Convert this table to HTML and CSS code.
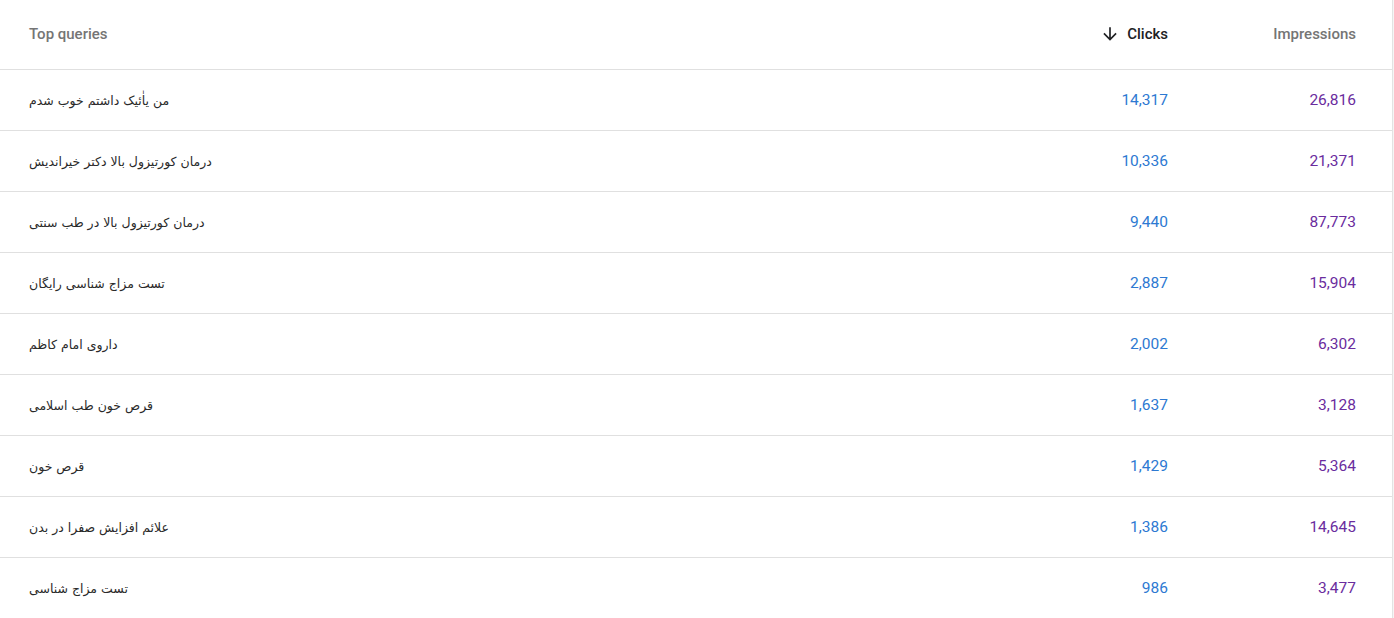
FILE: index.html
```html
<!DOCTYPE html>
<html lang="en">
<head>
<meta charset="utf-8">
<link rel="stylesheet" href="styles.css">
</head>
<body>
<div class="page">
  <div class="table">
    <div class="row head">
      <div class="cell query">Top queries</div>
      <div class="cell num clicks-h">
        <svg class="arrow" width="20" height="20" viewBox="0 0 24 24"><path d="M20 12l-1.41-1.41L13 16.17V4h-2v12.17l-5.58-5.59L4 12l8 8 8-8z" fill="#202124"/></svg>
        <span>Clicks</span>
      </div>
      <div class="cell num">Impressions</div>
    </div>
    <div class="row"><div class="cell query" dir="rtl">من یاٰئیک داشتم خوب شدم</div><div class="cell num clicks">14,317</div><div class="cell num impr">26,816</div></div>
    <div class="row"><div class="cell query" dir="rtl">درمان کورتیزول بالا دکتر خیراندیش</div><div class="cell num clicks">10,336</div><div class="cell num impr">21,371</div></div>
    <div class="row"><div class="cell query" dir="rtl">درمان کورتیزول بالا در طب سنتی</div><div class="cell num clicks">9,440</div><div class="cell num impr">87,773</div></div>
    <div class="row"><div class="cell query" dir="rtl">تست مزاج شناسی رایگان</div><div class="cell num clicks">2,887</div><div class="cell num impr">15,904</div></div>
    <div class="row"><div class="cell query" dir="rtl">داروی امام کاظم</div><div class="cell num clicks">2,002</div><div class="cell num impr">6,302</div></div>
    <div class="row"><div class="cell query" dir="rtl">قرص خون طب اسلامی</div><div class="cell num clicks">1,637</div><div class="cell num impr">3,128</div></div>
    <div class="row"><div class="cell query" dir="rtl">قرص خون</div><div class="cell num clicks">1,429</div><div class="cell num impr">5,364</div></div>
    <div class="row"><div class="cell query" dir="rtl">علائم افزایش صفرا در بدن</div><div class="cell num clicks">1,386</div><div class="cell num impr">14,645</div></div>
    <div class="row"><div class="cell query" dir="rtl">تست مزاج شناسی</div><div class="cell num clicks">986</div><div class="cell num impr">3,477</div></div>
  </div>
</div>
</body>
</html>
```

FILE: styles.css
```css
html, body {
  margin: 0;
  padding: 0;
  background: #f5f5f5;
}
.page {
  width: 1392px;
  height: 618px;
  background: #fff;
  border-right: 1px solid #e3e3e3;
  overflow: hidden;
  font-family: Roboto, "Liberation Sans", Arial, sans-serif;
}
.table {
  display: flex;
  flex-direction: column;
}
.row {
  display: grid;
  grid-template-columns: 1fr 188px 188px;
  height: 61px;
  align-items: center;
  border-bottom: 1px solid #e0e0e0;
  box-sizing: border-box;
  padding: 0 36px 0 29px;
}
.row.head {
  height: 70px;
  font-weight: 500;
  font-size: 15px;
  color: #757575;
  padding-bottom: 2px;
}
.cell.query {
  text-align: left;
}
.row:not(.head) .cell.query {
  font-family: "DejaVu Sans", "Liberation Sans", sans-serif;
  font-size: 12.5px;
  color: #2a2a2a;
  direction: rtl;
  justify-self: start;
}
.cell.num {
  text-align: right;
  justify-self: end;
}
.clicks-h {
  display: flex;
  align-items: center;
  gap: 7px;
  color: #202124;
}
.arrow {
  display: block;
}
.clicks {
  color: #2d79d2;
  font-size: 15.5px;
}
.impr {
  color: #6a2c9e;
  font-size: 15.5px;
}
```
